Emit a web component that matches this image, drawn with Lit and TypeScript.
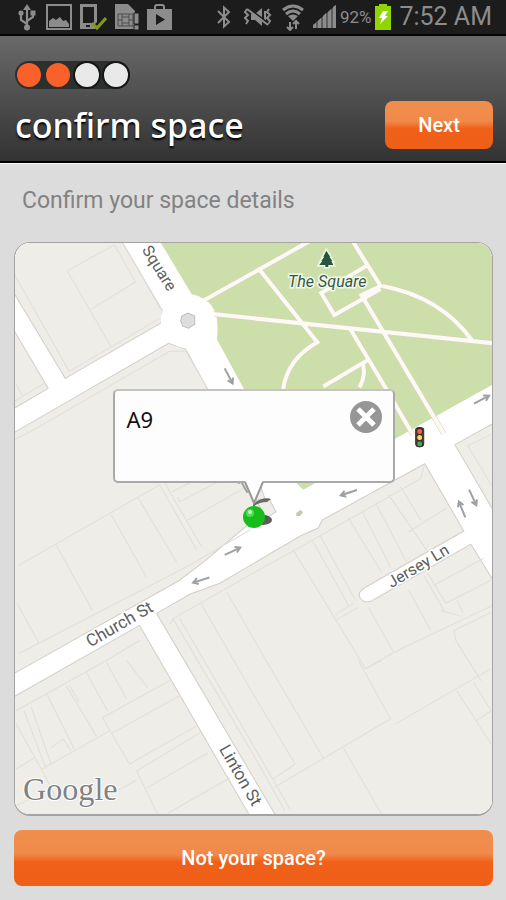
import { LitElement, html, svg, css } from "lit";
import { customElement, property } from "lit/decorators.js";

/** Row of system icons, battery level and clock. */
@customElement("status-bar")
class StatusBar extends LitElement {
  static styles = css`
    :host {
      display: flex;
      align-items: center;
      box-sizing: border-box;
      height: 36px;
      padding: 0 14px 0 16px;
      background: #1c1c1c;
      border-bottom: 2px solid #050505;
      color: #8c8c8c;
      font-family: Roboto, "Liberation Sans", sans-serif;
    }
    svg { display: block; flex: none; fill: currentColor; }
    .group { display: flex; align-items: center; gap: 7px; }
    .right { margin-left: auto; }
    .level { font-size: 17px; line-height: 32px; margin: 0 -4px; }
    .clock { font-size: 25px; line-height: 32px; white-space: nowrap; }
  `;

  render() {
    return html`
      <div class="group">
        <svg width="21" height="28" viewBox="-1 0 21 28" role="img" aria-label="USB connected">
          <path d="M10 1l4 6h-8z" />
          <circle cx="10" cy="24.500" r="3" />
          <g fill="none" stroke="currentColor" stroke-width="2.200">
            <path d="M10 5V24M10 21L4 17V10M10 18l6-4V10" />
          </g>
          <circle cx="4" cy="10" r="2.600" />
          <path d="M13.500 7.500h5v5h-5z" />
        </svg>
        <svg width="28" height="28" viewBox="0 0 28 28" role="img" aria-label="Screenshot saved">
          <path fill="none" stroke="currentColor" stroke-width="2" d="M3 2h24v24H3z" />
          <path d="M5 24v-6l4-3 3 2 4-3 3 4 3-1 3 4v3z" />
        </svg>
        <svg width="28" height="28" viewBox="0 0 28 28" role="img" aria-label="Device ready">
          <path fill-rule="evenodd" d="M1 1h17v18l-3 3 2 4H1zM4 4v16h11V4zM7 22v2h4v-2z" />
          <path fill="none" stroke="#7f9c16" stroke-width="3" d="M13 20l5 5 9-10" />
        </svg>
        <svg width="26" height="28" viewBox="1 0 26 28" role="img" aria-label="SIM notice">
          <path d="M2 1h13l7 7v18H2z" />
          <path fill="none" stroke="#4c4c4c" stroke-width="1" d="M5 11h15v12H5zM5 17h4M16 17h4M9 11v12M16 11v12M9 14h7M9 20h7" />
          <path stroke="#1c1c1c" stroke-width="1" d="M21 10h5v11h-5zM21 22h5v5h-5z" />
        </svg>
        <svg width="26" height="28" viewBox="0 0 26 28" role="img" aria-label="Play Store">
          <path fill="none" stroke="currentColor" stroke-width="2" d="M8 7V4q0-2 2-2h5q2 0 2 2v3" />
          <path fill-rule="evenodd" d="M0 6h25v21H0zM9 11v11l9-5.500z" />
        </svg>
      </div>
      <div class="group right">
        <svg width="20" height="24" viewBox="0 0 20 24" role="img" aria-label="Bluetooth on">
          <path fill="none" stroke="currentColor" stroke-width="2" d="M2 6l11 11-5 4.500V2.500L13 7 2 18" />
        </svg>
        <svg width="30" height="24" viewBox="0 0 30 24" role="img" aria-label="Sound off">
          <path d="M8 9h4l7-6v18l-7-6H8z" />
          <g fill="none" stroke="currentColor" stroke-width="2">
            <path d="M4 4L2 7l3 3-3 3 3 3-2 3M26 4l-2 3 3 3-3 3 3 3-2 3M22 6v12" />
            <path stroke="#1c1c1c" d="M5 3l20 15" />
            <path d="M4 4l21 16" />
          </g>
        </svg>
        <svg width="26" height="28" viewBox="0 0 26 28" role="img" aria-label="Wi-Fi connected">
          <g fill="none" stroke="currentColor" stroke-width="3">
            <path d="M3 7q10-8 20 0M6 11q7-6 14 0" />
            <path stroke-width="2" d="M10 27v-8M16 18v8M7 24l3 3 3-3M13 21l3-3 3 3" />
          </g>
          <path d="M8 13q5-3 10 0l-5 5z" />
        </svg>
        <svg width="24" height="24" viewBox="0 0 24 24" role="img" aria-label="Mobile signal">
          <path d="M0 23v-3l3-2v5zM5 23v-7l3-3v10zM10 23V11l3-3v15zM15 23V7l3-3v19zM20 23V2l3-2v23z" />
          <path opacity="0.6" d="M0 23v-3L23 0v23z" />
        </svg>
        <span class="level">92%</span>
        <svg width="18" height="26" viewBox="0 0 18 26" role="img" aria-label="Charging">
          <path fill="#91d500" d="M5 0h8v2h4v24H1V2h4z" />
          <path fill="#fff" d="M9 7h5l-3 5h3L6 20l2-6H5z" />
        </svg>
        <span class="clock">7:52 AM</span>
      </div>
    `;
  }
}

/** Dots that show how far along the booking is. */
@customElement("step-dots")
class StepDots extends LitElement {
  @property({ type: Number }) total = 4;
  @property({ type: Number }) done = 0;

  static styles = css`
    :host { display: flex; }
    .track {
      display: flex;
      gap: 5px;
      padding: 2px;
      border-radius: 16px;
      background: #2b302f;
    }
    .dot { width: 24px; height: 24px; border-radius: 50%; background: #e9e9e9; box-shadow: 0 0 0 2px #151515; }
    .dot.done { background: #f9602a; box-shadow: none; }
  `;

  render() {
    return html`<div class="track" role="img" aria-label="Step ${this.done} of ${this.total}">
      ${Array.from({ length: this.total }, (_, i) => html`<span class="dot ${i < this.done ? "done" : ""}"></span>`)}
    </div>`;
  }
}

/* City blocks */
const BLOCKS = [
  "M15 242H122L163 312L161 324L66 379L15 294Z",
  "M15 331L49 389L15 409Z",
  "M15 433L169 344L186 350L260 485L268 508L206 560L180 580L15 673Z",
  "M15 696L140 625L250 815H15Z",
  "M157 613L190 594L220 583L300 536L318 528L322 520L424 464L463 531L365 587Q356 592 360 598Q365 605 374 599L470 544L492 580V815H276Z",
  "M454 445L492 424V510Z",
];

/* Lot boundaries, grouped by block */
const LOTS = [
  "M15 275L70 372L159 320M122 242L161 310M68 272L115 246L136 283L92 310M68 272L112 348",
  "M15 402L45 384M17 385L24 397",
  "M28 434L170 352L186 352L206 386M15 440L28 434M20 565L160 485L197 550M57 545L93 610M112 515L147 577M138 497L177 562M165 483L202 547M20 653L190 565L250 530M18 603L40 643M172 492L190 483M180 502L222 480M180 502L178 497M188 520L245 488",
  "M17 710L107 660L140 640M25 710L47 768M32 706L52 763M47 692L75 748M67 685L97 735M70 684L80 702M87 672L108 710M107 662L127 698M127 660L148 687M43 768L110 730M52 747L64 738L72 750M103 717L170 680M103 717L130 763L197 725M113 732L180 695M137 770L200 732M137 770L158 813M145 788L208 752M168 812L230 777M17 723L45 773L58 800M17 768L35 757M119 789L137 779M15 806L30 798",
  "M170 624L174 618L253 573L300 547L420 479L424 464M173 618L253 753L285 810M180 618L290 808M201 603L253 693L295 763L273 778M227 592L266 660L323 757M273 787L390 718L358 660M293 550L365 668L395 651L492 605M312 540L348 605M320 536L355 600M335 620L358 607M335 614L353 603M348 518L381 572M361 510L390 567M375 503L406 562M388 495L426 550M400 487L420 520M408 532L446 508M368 607L393 652M408 590L430 630M423 575L443 610M427 573L445 603L490 580M433 585L483 558M440 610L460 616M456 600L462 612M490 612L453 630L455 640L480 680M343 747L381 813M395 723L490 668M366 668L381 660M456 690L490 743M473 682L490 710L475 720",
  "M490 435L467 446L492 488",
];

/* Park footpaths */
const PATHS =
  "M203 302L310 242M213 315L492 344M352 242L380 287L361 296L443 434M259 270L317 343Q287 360 283 390M350 330L386 390L412 435M366 267L321 294L334 316L380 290M382 287Q440 298 471 341M323 387L367 361M362 363Q366 375 359 388";

/* One-way arrows: x, y, heading in degrees */
const ARROWS = [
  [233, 551, -25], [201, 580, 162], [348, 493, 162], [481, 400, -28], [229, 377, 62],
  [461, 509, 248], [472, 498, 65], [243, 485, 240],
];

/** Street map with its labels, and the selected bay's pin and callout on top. */
@customElement("space-map")
class SpaceMap extends LitElement {
  @property() bay = "";

  static styles = css`
    :host {
      display: block;
      position: relative;
      box-sizing: border-box;
      overflow: hidden;
      border: 1px solid #a3a3a3;
      border-bottom-width: 2px;
      border-radius: 16px;
      background: #efede8;
    }
    .streets { position: absolute; inset: 0; width: 100%; height: 100%; }
    .label { font-family: Roboto, "Liberation Sans", sans-serif; font-size: 17px; fill: #5e5e5e; stroke: #fff; stroke-width: 3px; paint-order: stroke; }
    .minor { font-size: 16px; }
    .park { font-size: 16px; font-style: italic; fill: #315a45; stroke: #f4f8ec; }
    .brand { font-family: "Liberation Serif", serif; font-size: 32px; fill: #828282; stroke: #fff; stroke-width: 2px; paint-order: stroke; }
    .place { position: absolute; inset: auto 0 50% 0; display: flex; flex-direction: column; align-items: center; }
    .callout {
      display: flex;
      justify-content: space-between;
      align-items: flex-start;
      box-sizing: border-box;
      width: 282px;
      height: 94px;
      padding: 10px 11px 10px 12px;
      border: 2px solid #a9a9a9;
      border-top-color: #c4c4c4;
      border-radius: 5px;
      background: #fdfdfd;
    }
    .bay { margin: 0; font-family: "Noto Sans", sans-serif; font-size: 22px; line-height: 36px; font-weight: 400; color: #111; }
    .close { width: 32px; height: 32px; padding: 0; border: 0; background: none; }
    .close svg, .pin { display: block; }
    .pin { margin-top: -2px; }
  `;

  render() {
    return html`
      <svg class="streets" viewBox="16 243 475 571" preserveAspectRatio="xMidYMid slice" role="img" aria-label="Map of The Square and Church St">
        <path fill="#fff" d="M0 230h520v600H0z" />
        <path fill="#ccdfab" d="M160 242H492V385L303 490L293 480L217 340Q222 300 193 297Z" />
        <path fill="#fff" d="M479 242h14v18Q489 247 479 242z" />
        <path fill="none" stroke="#dccfba" stroke-width="5" d=${PATHS} />
        <path fill="none" stroke="#fbfaf4" stroke-width="4" d=${PATHS} />
        <g fill="#efede8" stroke="#d2cec9" stroke-width="1">
          ${BLOCKS.map((d) => svg`<path d=${d} />`)}
        </g>
        <g fill="none" stroke="#e2ded8" stroke-width="1">
          ${LOTS.map((d) => svg`<path d=${d} />`)}
        </g>
        <path fill="#fff" stroke="#fff" d="M262 520L268 500L300 520L262 540z" />
        <path fill="#efede8" stroke="#ccc" d="M256 500l13-1 7 13-10 6z" />
        <circle cx="188" cy="322" r="27" fill="#fff" />
        <path d="M182 317l6-3 7 3v8l-6 4-6-2-2-5z" fill="#ddd" stroke="#c2beb8" />
        <path fill="#c9c8b8" d="M296 513l4-3 3 2-3 4-4 0z" />
        <g fill="none" stroke="#9da1a3" stroke-width="2">
          ${ARROWS.map(([x, y, a]) => svg`<path transform="translate(${x} ${y}) rotate(${a})" d="M-9 0H7M3 -3L8 0L3 3" />`)}
        </g>
        <g stroke="#3c2c20" stroke-width="1">
          <path fill="#594236" d="M415 430q0-2 4-2t4 2v14q0 3-4 3t-4-3z" />
          <circle cx="419" cy="432" r="3" fill="#f0605a" />
          <circle cx="419" cy="438" r="3" fill="#efdc6c" />
          <circle cx="419" cy="444" r="3" fill="#44a26a" />
        </g>
        <path fill="#24573e" stroke="#f4f8ec" stroke-width="3" paint-order="stroke" d="M326 252l4 6h-1l3 4h-1l2 4h-5v2h-3v-2h-6l3-4h-1l3-4h-1z" />
        <text class="label park" x="327" y="288" text-anchor="middle">The Square</text>
        <text class="label minor" transform="translate(142 251) rotate(58)">Square</text>
        <text class="label" transform="translate(91 647) rotate(-30)">Church St</text>
        <text class="label minor" transform="translate(391 588) rotate(-31)">Jersey Ln</text>
        <text class="label" transform="translate(219 748) rotate(60)">Linton St</text>
        <text class="brand" x="24" y="799">Google</text>
      </svg>
      <div class="place">
        <div class="callout">
          <h2 class="bay">${this.bay}</h2>
          <button class="close" type="button" aria-label="Close">
            <svg width="32" height="32" viewBox="0 0 32 32">
              <circle cx="16" cy="16" r="16" fill="#969696" />
              <path stroke="#fff" stroke-width="5" d="M8 8l16 16M24 8L8 24" />
            </svg>
          </button>
        </div>
        <svg class="pin" width="40" height="48" viewBox="0 0 40 48" aria-hidden="true">
          <path fill="#4a4a4a" opacity="0.8" d="M19 23q10-8 18-5l-4 3q-8 0-14 5z" />
          <ellipse cx="29" cy="39" rx="9" ry="5" fill="#333" opacity="0.8" />
          <path fill="#fdfdfd" d="M11 0h18L20 22z" />
          <path fill="none" stroke="#999" stroke-width="2" d="M11 1l9 21 9-21" />
          <circle cx="20" cy="36" r="11" fill="#18bd1c" />
          <circle cx="16" cy="32" r="4" fill="#4fdd52" />
          <circle cx="16" cy="31" r="2" fill="#c9f5c9" />
        </svg>
      </div>
    `;
  }
}

@customElement("app-root")
class AppRoot extends LitElement {
  static styles = css`
    :host {
      display: flex;
      flex-direction: column;
      min-height: 100vh;
      background: #dcdcdc;
      font-family: Roboto, "Liberation Sans", sans-serif;
    }
    .head {
      display: flex;
      flex-direction: column;
      gap: 12px;
      padding: 25px 13px 12px 15px;
      background: linear-gradient(#696969, #333);
      border-bottom: 2px solid #000;
      box-shadow: 0 1px 0 #f8f8f8;
    }
    .row { display: flex; align-items: center; justify-content: space-between; }
    .title {
      margin: 0;
      font-family: "Noto Sans", sans-serif;
      font-size: 34px;
      line-height: 48px;
      font-weight: 500;
      color: #fff;
      text-shadow: 0 2px 2px #000;
    }
    .action {
      border: 0;
      border-radius: 8px;
      background: linear-gradient(#f08e4e 0%, #f08a4a 42%, #ef6018 58%, #f05f18 100%);
      color: #fff;
      font-family: inherit;
      font-size: 20px;
      font-weight: 500;
      line-height: 24px;
    }
    .next { width: 108px; padding: 12px 0; }
    .body { flex: 1; display: flex; flex-direction: column; padding: 22px 13px 14px 14px; }
    .lead { margin: 0 8px 25px; font-size: 23px; line-height: 32px; color: #828282; }
    .map { flex: 1; min-height: 320px; margin-bottom: 14px; }
    .wide { padding: 16px 0; }
  `;

  render() {
    return html`
      <status-bar></status-bar>
      <header class="head">
        <step-dots total="4" done="2"></step-dots>
        <div class="row">
          <h1 class="title">confirm space</h1>
          <button class="action next" type="button">Next</button>
        </div>
      </header>
      <main class="body">
        <p class="lead">Confirm your space details</p>
        <space-map class="map" bay="A9"></space-map>
        <button class="action wide" type="button">Not your space?</button>
      </main>
    `;
  }
}
